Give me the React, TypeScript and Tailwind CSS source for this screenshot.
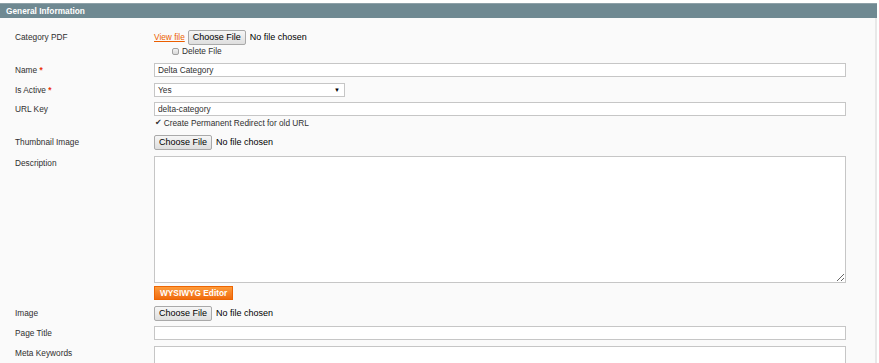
const labelCls = "w-[139px] shrink-0 text-[8.3px] leading-[14px] text-[#2f2f2f]";
const inputCls = "block w-full h-[14px] border border-[#c6c6c6] bg-white px-[3px] text-[8.3px] leading-[12px] text-[#2f2f2f] outline-none";

const FileButton = () => (
    <div className="flex items-center">
        <span className="h-[15px] px-[4px] rounded-[2px] border border-[#a9a9a9] bg-gradient-to-b from-[#f6f6f6] to-[#dedede] text-[9px] leading-[13px] text-black">
            Choose File
        </span>
        <span className="ml-[4px] text-[9px] leading-[15px] text-black">No file chosen</span>
    </div>
);

const Req = () => <span className="text-[#eb340a] font-bold"> *</span>;

export default function App() {
    return (
        <div className="w-[879px] h-[363px] overflow-hidden bg-white font-['Liberation_Sans',Arial,sans-serif]">
            <div className="pt-[3px] w-[877px]">
                <div className="h-[15px] bg-[#6f8992] border-t border-[#8ea1a8] pl-[6px] text-[8.3px] font-bold leading-[14px] text-white">
                    General Information
                </div>
                <div className="bg-[#fafafa] border-r-2 border-[#e8e8e8] pl-[15px] pr-[29px] pt-[12px] pb-[20px]">
                    {/* Category PDF */}
                    <div className="flex items-start">
                        <div className={labelCls}>Category PDF</div>
                        <div className="flex flex-col">
                            <div className="flex items-center h-[15px]">
                                <span className="text-[8.3px] text-[#eb5e00] underline mr-[3px]">View file</span>
                                <FileButton />
                            </div>
                            <div className="flex items-center h-[12px] pl-[18px]">
                                <span className="w-[7px] h-[7px] rounded-[2px] border border-[#a0a0a0] bg-gradient-to-b from-[#f2f2f2] to-[#d8d8d8]"></span>
                                <span className="ml-[3px] text-[8.3px] text-[#2f2f2f]">Delete File</span>
                            </div>
                        </div>
                    </div>

                    {/* Name */}
                    <div className="flex items-start mt-[6px]">
                        <div className={labelCls}>Name<Req /></div>
                        <div className="flex-1">
                            <input className={inputCls} defaultValue="Delta Category" />
                        </div>
                    </div>

                    {/* Is Active */}
                    <div className="flex items-start mt-[6px]">
                        <div className={labelCls}>Is Active<Req /></div>
                        <div className="relative w-[191px] h-[14px] border border-[#c6c6c6] bg-white px-[3px] text-[8.3px] leading-[12px] text-[#2f2f2f]">
                            Yes
                            <span className="absolute right-[4px] top-0 text-[6px] leading-[12px] text-black">▼</span>
                        </div>
                    </div>

                    {/* URL Key */}
                    <div className="flex items-start mt-[5px]">
                        <div className={labelCls}>URL Key</div>
                        <div className="flex-1 flex flex-col">
                            <input className={inputCls} defaultValue="delta-category" />
                            <div className="flex items-center h-[12px] mt-[1px] pl-[1px] text-[8.3px] text-[#2f2f2f]">
                                <span className="font-['DejaVu_Sans'] text-[8px] mr-[2px]">✔</span>
                                Create Permanent Redirect for old URL
                            </div>
                        </div>
                    </div>

                    {/* Thumbnail */}
                    <div className="flex items-start mt-[6px]">
                        <div className={labelCls}>Thumbnail Image</div>
                        <FileButton />
                    </div>

                    {/* Description */}
                    <div className="flex items-start mt-[6px]">
                        <div className={labelCls}>Description</div>
                        <div className="flex-1 flex flex-col items-start">
                            <textarea className="block w-full h-[127px] border border-[#c6c6c6] bg-white outline-none"></textarea>
                            <span className="mt-[3px] h-[14px] px-[5px] border border-[#ed6502] bg-gradient-to-b from-[#fd9b3a] to-[#f06b0c] text-[8.3px] font-bold leading-[12px] text-white">
                                WYSIWYG Editor
                            </span>
                        </div>
                    </div>

                    {/* Image */}
                    <div className="flex items-start mt-[6px]">
                        <div className={labelCls}>Image</div>
                        <FileButton />
                    </div>

                    {/* Page Title */}
                    <div className="flex items-start mt-[5px]">
                        <div className={labelCls}>Page Title</div>
                        <div className="flex-1">
                            <input className={inputCls} />
                        </div>
                    </div>

                    {/* Meta Keywords */}
                    <div className="flex items-start mt-[6px]">
                        <div className={labelCls}>Meta Keywords</div>
                        <div className="flex-1">
                            <textarea className="block w-full h-[40px] border border-[#c6c6c6] bg-white outline-none"></textarea>
                        </div>
                    </div>
                </div>
            </div>
        </div>
    );
}
